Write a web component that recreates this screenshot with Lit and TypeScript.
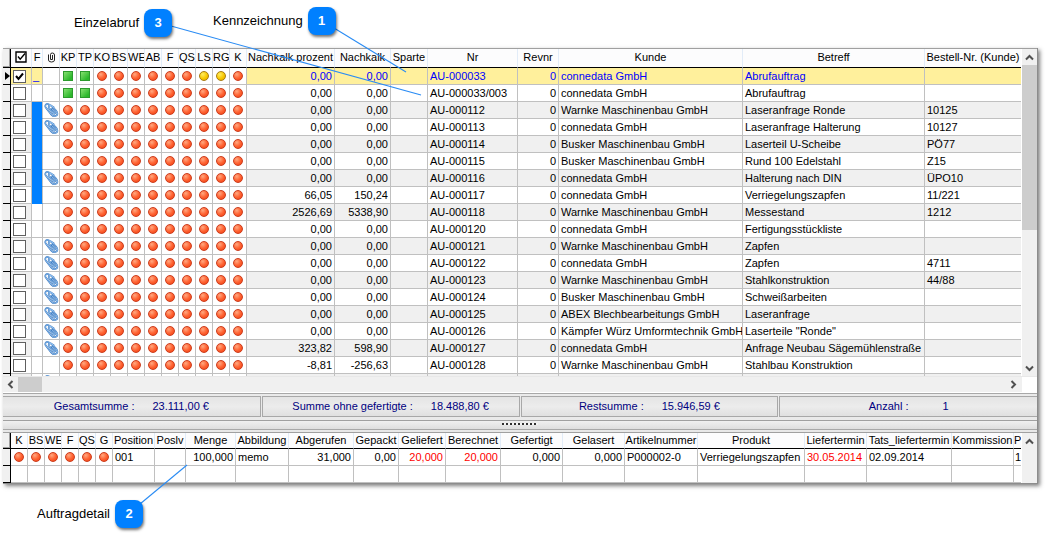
import { LitElement, html, css, nothing } from "lit";
import { customElement } from "lit/decorators.js";

type Row = {
  nr: string; kunde: string; betreff: string; bestell?: string;
  prozent?: string; nachkalk?: string; clip?: boolean; flag?: boolean;
};

const W = "Warnke Maschinenbau GmbH";
const C = "connedata GmbH";
const B = "Busker Maschinenbau GmbH";

const rows: Row[] = [
  { nr: "AU-000033", kunde: C, betreff: "Abrufauftrag" },
  { nr: "AU-000033/003", kunde: C, betreff: "Abrufauftrag" },
  { nr: "AU-000112", kunde: W, betreff: "Laseranfrage Ronde", bestell: "10125", clip: true, flag: true },
  { nr: "AU-000113", kunde: C, betreff: "Laseranfrage Halterung", bestell: "10127", clip: true, flag: true },
  { nr: "AU-000114", kunde: B, betreff: "Laserteil U-Scheibe", bestell: "PÖ77", flag: true },
  { nr: "AU-000115", kunde: B, betreff: "Rund 100 Edelstahl", bestell: "Z15", flag: true },
  { nr: "AU-000116", kunde: C, betreff: "Halterung nach DIN", bestell: "ÜPO10", clip: true, flag: true },
  { nr: "AU-000117", kunde: C, betreff: "Verriegelungszapfen", bestell: "11/221", prozent: "66,05", nachkalk: "150,24", flag: true },
  { nr: "AU-000118", kunde: W, betreff: "Messestand", bestell: "1212", prozent: "2526,69", nachkalk: "5338,90" },
  { nr: "AU-000120", kunde: C, betreff: "Fertigungsstückliste" },
  { nr: "AU-000121", kunde: W, betreff: "Zapfen", clip: true },
  { nr: "AU-000122", kunde: C, betreff: "Zapfen", bestell: "4711", clip: true },
  { nr: "AU-000123", kunde: W, betreff: "Stahlkonstruktion", bestell: "44/88", clip: true },
  { nr: "AU-000124", kunde: B, betreff: "Schweißarbeiten", clip: true },
  { nr: "AU-000125", kunde: "ABEX Blechbearbeitungs GmbH", betreff: "Laseranfrage", clip: true },
  { nr: "AU-000126", kunde: "Kämpfer Würz Umformtechnik GmbH", betreff: "Laserteile \"Ronde\"", clip: true },
  { nr: "AU-000127", kunde: C, betreff: "Anfrage Neubau Sägemühlenstraße", prozent: "323,82", nachkalk: "598,90", clip: true },
  { nr: "AU-000128", kunde: W, betreff: "Stahlbau Konstruktion", prozent: "-8,81", nachkalk: "-256,63" },
];

const states = ["KP", "TP", "KO", "BS", "WE", "AB", "F", "QS", "LS", "RG", "K"];
const columns = ["Nachkalk prozent", "Nachkalk", "Sparte", "Nr", "Revnr", "Kunde", "Betreff", "Bestell-Nr. (Kunde)"];
const detailStates = ["K", "BS", "WE", "F", "QS", "G"];
const detail: { title: string; col: string; value?: string; kind?: string }[] = [
  { title: "Position", col: "w42", value: "001" },
  { title: "Poslv", col: "w31" },
  { title: "Menge", col: "w50", value: "100,000", kind: "num" },
  { title: "Abbildung", col: "w53", value: "memo" },
  { title: "Abgerufen", col: "w65", value: "31,000", kind: "num" },
  { title: "Gepackt", col: "w45", value: "0,00", kind: "num" },
  { title: "Geliefert", col: "w47", value: "20,000", kind: "num red" },
  { title: "Berechnet", col: "w55", value: "20,000", kind: "num red" },
  { title: "Gefertigt", col: "w62", value: "0,000", kind: "num" },
  { title: "Gelasert", col: "w62", value: "0,000", kind: "num" },
  { title: "Artikelnummer", col: "w73", value: "P000002-0" },
  { title: "Produkt", col: "w107", value: "Verriegelungszapfen" },
  { title: "Liefertermin", col: "w62", value: "30.05.2014", kind: "red" },
  { title: "Tats_liefertermin", col: "w85", value: "02.09.2014" },
  { title: "Kommission", col: "w62" },
  { title: "P", col: "rest", value: "1", kind: "tight" },
];

const CLIP = "M9.6 4.2L4.6 1.2C2.4 .2 .6 2 1.6 4.2L7.4 11.6C9.4 14 13 13.6 13.4 11C13.5 9.8 13 8.8 12.2 7.8L7.6 2.8C6 1.6 4 3 5 5L9.2 10.4C10.4 11.4 11.6 10.4 10.8 9.2L7.6 5.6";
const clip = () => html`<svg class="clip" viewBox="0 0 15 15" aria-label="Anhang">
  <path d=${CLIP} fill="none" stroke="#3c78bc" stroke-width="1.7" stroke-linecap="round"/>
  <path d=${CLIP} fill="none" stroke="#9ccbfa" stroke-width=".8" stroke-linecap="round"/>
</svg>`;

const chevron = (d: string) =>
  html`<svg class="chev" viewBox="0 0 9 9"><path d=${d} fill="none" stroke="#505050" stroke-width="2"/></svg>`;
const UP = "M1 6.5 L4.5 3 L8 6.5";
const DOWN = "M1 2.5 L4.5 6 L8 2.5";
const LEFT = "M6.5 1 L3 4.5 L6.5 8";
const RIGHT = "M2.5 1 L6 4.5 L2.5 8";

@customElement("app-root")
export class AppRoot extends LitElement {
  static styles = css`
    :host {
      display: block;
      position: relative;
      box-sizing: border-box;
      padding: 48px 7px 0 3px;
      font: 11px/16px "Liberation Sans", Arial, sans-serif;
      color: #000;
      background: #fff;
      min-height: 100vh;
      overflow: hidden;
    }
    .panel {
      background: #e8e8e8;
      border-right: 1px solid #8c8c8c;
      border-bottom: 1px solid #8c8c8c;
      box-shadow: 2px 2px 4px rgba(0, 0, 0, 0.5);
    }
    .pane {
      display: grid;
      grid-template-columns: minmax(0, 1fr) 15px;
      column-gap: 1px;
      border-top: 1px solid #a0a0a0;
      background: #fff;
    }
    .main { height: 327px; }
    .view { overflow: hidden; min-height: 0; }
    table { width: 100%; table-layout: fixed; border-collapse: separate; border-spacing: 0; }
    th, td {
      height: 17px;
      padding: 0 2px;
      box-sizing: border-box;
      white-space: nowrap;
      overflow: hidden;
      border-right: 1px solid #c0c0c0;
      border-bottom: 1px solid #c0c0c0;
      text-align: left;
      font-weight: normal;
      line-height: 16px;
    }
    th {
      height: 19px;
      padding: 0 0 2px;
      background: #fcfcfd;
      border-right-color: #e2ecf8;
      border-bottom-color: #000;
      text-align: center;
    }
    .sub th { height: 16px; padding: 0; line-height: 15px; }
    td:last-child, th:last-child { border-right: 0; }
    .ind { background: #f0f0f0; border-color: #000; padding: 0; }
    th.ind { background: #f0f0f0; border-right-color: #000; box-shadow: inset -1px -1px #a0a0a0; }
    .num { text-align: right; }
    .red { color: #f00; }
    .kunde { padding-right: 0; }
    .tight { padding: 0 1px; }
    .icon { padding: 0; background: #fff; }
    .odd .data, .odd .tick { background: #f0f0f0; }
    .current .data, .current .tick, .current .mark { background: #fff09c; }
    .current { color: #00f; }
    .mark { padding: 0 1px; background: #fff; }
    .mark.on { background: #0080ff; border-color: #0080ff #c0c0c0 #0080ff #0080ff; }
    .c8 { width: 8px; } .c21 { width: 21px; } .c11 { width: 11px; } .c17 { width: 17px; }
    .c88 { width: 88px; } .c56 { width: 56px; } .c37 { width: 37px; } .c90 { width: 90px; }
    .c41 { width: 41px; } .c184 { width: 184px; } .c96 { width: 96px; }
    .w42 { width: 42px; } .w31 { width: 31px; } .w50 { width: 50px; } .w53 { width: 53px; }
    .w65 { width: 65px; } .w45 { width: 45px; } .w47 { width: 47px; } .w55 { width: 55px; }
    .w62 { width: 62px; } .w73 { width: 73px; } .w107 { width: 107px; } .w85 { width: 85px; }
    .dot, .box { display: block; width: 10px; height: 10px; margin: 0 auto; box-sizing: border-box; }
    .dot {
      border-radius: 50%;
      border: 1px solid #cc3c1c;
      background: radial-gradient(circle at 35% 30%, #ffa880, #ff6434 50%, #ee3c0c);
    }
    .dot.yellow { border-color: #a87c10; background: radial-gradient(circle at 35% 30%, #ffec60, #f8c800 55%, #dca000); }
    .box { border: 1px solid #2c9a2c; background: linear-gradient(135deg, #86e070, #2cb82c 80%); }
    input[type="checkbox"] {
      appearance: none;
      display: block;
      width: 13px;
      height: 13px;
      margin: 0;
      border: 1px solid #606060;
      background: #fff;
    }
    input[type="checkbox"]:checked {
      background: #fff url("data:image/svg+xml,%3Csvg xmlns='http://www.w3.org/2000/svg' viewBox='0 0 11 11'%3E%3Cpath d='M2 5l2.5 3L9 2.5' fill='none' stroke='%23000' stroke-width='2'/%3E%3C/svg%3E");
    }
    .clip { display: block; width: 15px; height: 15px; margin-left: 1px; }
    .glyph { display: block; margin: 0 auto; }
    .arrow { display: block; margin: 0 0 0 auto; }
    .vbar { display: flex; flex-direction: column; background: #f0f0f0; }
    .thumb { flex: 0 1 165px; background: #cdcdcd; }
    .space { flex: 1; }
    button { display: grid; place-items: center; padding: 0; border: 0; background: #f0f0f0; height: 16px; width: 15px; }
    .chev { display: block; width: 9px; height: 9px; }
    .hbar { display: flex; margin-top: 1px; height: 15px; padding-right: 16px; background: linear-gradient(#f0f0f0, #f0f0f0) no-repeat 0 0 / calc(100% - 15px) 100% #fff; }
    .hbar button { height: 15px; }
    .hthumb { width: 24px; background: #cdcdcd; }
    .hwrap { background: #fff; padding-bottom: 1px; border-bottom: 1px solid #a8a8a8; }
    .sums { display: grid; grid-template-columns: repeat(4, minmax(0, 1fr)); gap: 1px; padding: 2px 0 3px; background: #eaeaea; border-bottom: 1px solid #a0a0a0; }
    .sum {
      display: flex;
      justify-content: center;
      gap: 18px;
      border: 1px solid #a8a8a8;
      background: linear-gradient(#e4e4e4, #ececec 50%, #e0e0e0);
      color: #000080;
      line-height: 19px;
    }
    .sum:first-child { border-left: 0; }
    .sum:last-child { border-right: 0; gap: 34px; }
    .split {
      height: 8px;
      background: linear-gradient(#f0f0f0, #dedede);
      border-bottom: 1px solid #a8a8a8;
      margin-bottom: 2px;
      display: flex;
      justify-content: center;
    }
    .grip { width: 36px; height: 2px; margin-top: 2px; background: repeating-linear-gradient(90deg, #303030 0 2px, #f4f4f4 2px 4px); }
    .lines { position: absolute; left: 0; top: 0; width: 1045px; height: 539px; pointer-events: none; }
    .note { position: absolute; display: flex; align-items: center; gap: 5px; font-size: 13px; white-space: nowrap; }
    .n1 { left: 213px; top: 7px; }
    .n2 { left: 37px; top: 500px; }
    .n3 { left: 74px; top: 9px; }
    .badge {
      width: 28px;
      height: 28px;
      border-radius: 8px;
      background: #0080ff;
      color: #fff;
      font-weight: bold;
      line-height: 28px;
      text-align: center;
      box-shadow: 1px 2px 3px rgba(0, 0, 0, 0.55);
    }
  `;

  private state(i: number, row: number) {
    if (row < 2 && i < 2) return html`<span class="box"></span>`;
    return html`<span class="dot ${row === 0 && (i === 8 || i === 9) ? "yellow" : ""}"></span>`;
  }

  private row(r: Row, i: number) {
    return html`<tr class="${i === 0 ? "current" : i % 2 === 0 ? "odd" : ""}">
      <td class="ind">${i === 0 ? html`<svg class="arrow" width="5" height="8" viewBox="0 0 5 8"><path d="M0 0L5 4L0 8Z"/></svg>` : nothing}</td>
      <td class="tick"><input type="checkbox" aria-label=${r.nr} ?checked=${i === 0}></td>
      <td class="mark ${r.flag ? "on" : ""}">${i === 0 ? "_" : nothing}</td>
      <td class="icon">${r.clip ? clip() : nothing}</td>
      ${states.map((_, s) => html`<td class="icon">${this.state(s, i)}</td>`)}
      <td class="data num">${r.prozent ?? "0,00"}</td>
      <td class="data num">${r.nachkalk ?? "0,00"}</td>
      <td class="data"></td>
      <td class="data">${r.nr}</td>
      <td class="data num">0</td>
      <td class="data kunde">${r.kunde}</td>
      <td class="data">${r.betreff}</td>
      <td class="data">${r.bestell ?? nothing}</td>
    </tr>`;
  }

  render() {
    return html`
      <div class="panel">
        <div class="pane main">
          <div class="view">
            <table>
              <colgroup>
                <col class="c8"><col class="c21"><col class="c11"><col class="c17">
                ${states.map(() => html`<col class="c17">`)}
                <col class="c88"><col class="c56"><col class="c37"><col class="c90"><col class="c41"><col class="c184"><col><col class="c96">
              </colgroup>
              <thead><tr>
                <th class="ind"></th>
                <th><svg class="glyph" width="12" height="12" viewBox="0 0 12 12"><path d="M1 1H11V11H1Z" fill="#fff" stroke="#000" stroke-width="1.4"/><path d="M3 5.5L5.2 8.2L10 2.5" fill="none" stroke="#000" stroke-width="1.4"/></svg></th>
                <th>F</th>
                <th><svg class="glyph" width="9" height="11" viewBox="0 0 9 11"><path d="M5.5 3V7.5H3.5V2.5Q3.5 1 5.3 1Q7.5 1 7.5 3V8Q7.5 10 4.5 10Q1.5 10 1.5 8V2.5" fill="none" stroke="#222" stroke-width="1"/></svg></th>
                ${states.map((s) => html`<th>${s}</th>`)}
                ${columns.map((c) => html`<th>${c}</th>`)}
              </tr></thead>
              <tbody>
                ${rows.map((r, i) => this.row(r, i))}
                <tr class="odd">
                  <td class="ind"></td><td class="tick"></td><td class="mark"></td><td class="icon">${clip()}</td>
                  ${states.map(() => html`<td class="icon"></td>`)}
                  ${columns.map(() => html`<td class="data"></td>`)}
                </tr>
              </tbody>
            </table>
          </div>
          <div class="vbar">
            <button aria-label="Nach oben">${chevron(UP)}</button>
            <div class="thumb"></div><div class="space"></div>
            <button aria-label="Nach unten">${chevron(DOWN)}</button>
          </div>
        </div>
        <div class="hwrap"><div class="hbar">
          <button aria-label="Nach links">${chevron(LEFT)}</button>
          <div class="hthumb"></div><div class="space"></div>
          <button aria-label="Nach rechts">${chevron(RIGHT)}</button>
        </div></div>
        <div class="sums">
          <div class="sum"><span>Gesamtsumme :</span><span>23.111,00 €</span></div>
          <div class="sum"><span>Summe ohne gefertigte :</span><span>18.488,80 €</span></div>
          <div class="sum"><span>Restsumme :</span><span>15.946,59 €</span></div>
          <div class="sum"><span>Anzahl :</span><span>1</span></div>
        </div>
        <div class="split"><div class="grip"></div></div>
        <div class="pane">
          <div class="view">
            <table class="sub">
              <colgroup>
                <col class="c8">
                ${detailStates.map(() => html`<col class="c17">`)}
                ${detail.map((d) => html`<col class=${d.col}>`)}
              </colgroup>
              <thead><tr>
                <th class="ind"></th>
                ${detailStates.map((s) => html`<th>${s}</th>`)}
                ${detail.map((d) => html`<th>${d.title}</th>`)}
              </tr></thead>
              <tbody>
                <tr>
                  <td class="ind"></td>
                  ${detailStates.map(() => html`<td class="icon"><span class="dot"></span></td>`)}
                  ${detail.map((d) => html`<td class=${d.kind ?? ""}>${d.value ?? nothing}</td>`)}
                </tr>
                <tr>
                  <td class="ind"></td>
                  ${detailStates.map(() => html`<td></td>`)}
                  ${detail.map(() => html`<td></td>`)}
                </tr>
              </tbody>
            </table>
          </div>
          <div class="vbar"><button aria-label="Detail nach oben">${chevron(UP)}</button></div>
        </div>
      </div>
      <svg class="lines" viewBox="0 0 1045 539">
        <g stroke="#2a8cf4" stroke-width="1.1">
          <path d="M334 28L406 72"/><path d="M171 26L421 95"/><path d="M140 504L187 465"/>
        </g>
      </svg>
      <div class="note n3"><span>Einzelabruf</span><span class="badge">3</span></div>
      <div class="note n1"><span>Kennzeichnung</span><span class="badge">1</span></div>
      <div class="note n2"><span>Auftragdetail</span><span class="badge">2</span></div>
    `;
  }
}
